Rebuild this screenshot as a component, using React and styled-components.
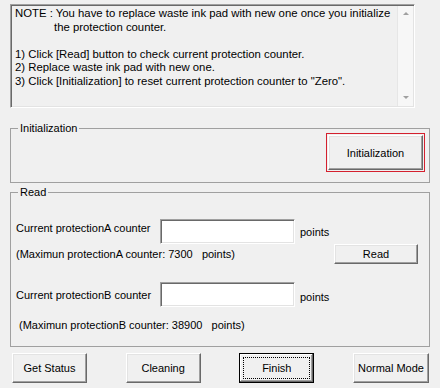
import React from 'react';
import styled, { createGlobalStyle } from 'styled-components';

const Global = createGlobalStyle`
body {
  margin: 0;
  background: #f0f0f0;
  font-family: "Liberation Sans", Arial, sans-serif;
  font-size: 11px;
  color: #000;
}
`

const Page = styled.div`
width: 440px;
height: 388px;
padding-top: 4px;
box-sizing: border-box;
background: #f0f0f0;
`

const NoteBox = styled.div`
margin-left: 10px;
width: 405px;
height: 104px;
box-sizing: border-box;
display: flex;
border-style: solid;
border-width: 1px;
border-color: #a0a0a0 #ffffff #ffffff #a0a0a0;
box-shadow: inset 1px 1px 0 #696969, inset -1px -1px 0 #e3e3e3;
`

const NoteText = styled.div`
flex: 1;
padding: 2px 0 0 4px;
font-size: 11.35px;
line-height: 13.5px;
`

const Line = styled.div`
padding-left: ${props => props.indent || 0}px;
min-height: 13.5px;
`

const ScrollBar = styled.div`
width: 16px;
margin: 1px 1px 1px 0;
border-left: 1px solid #e6e6e6;
background: #f7f7f7;
display: flex;
flex-direction: column;
justify-content: space-between;
align-items: center;
padding: 6px 0 7px;
box-sizing: border-box;
`

const Arrow = styled.div`
width: 0;
height: 0;
border-left: 3.5px solid transparent;
border-right: 3.5px solid transparent;
${props => props.down
  ? 'border-top: 3px solid #a0a0a0;'
  : 'border-bottom: 3px solid #a0a0a0;'}
`

const Group = styled.fieldset`
margin: ${props => props.top || 0}px 10px 0;
padding: 0 5px ${props => props.bottom || 0}px;
border: 1px solid #a0a0a0;
min-width: 0;
`

const Legend = styled.legend`
margin-left: 2px;
padding: 0 2px;
line-height: 13px;
`

const InitRow = styled.div`
display: flex;
justify-content: flex-end;
padding-right: 1px;
`

const Button = styled.button`
font-family: "Liberation Sans", Arial, sans-serif;
font-size: 11px;
color: #000;
width: ${props => props.w || 75}px;
height: ${props => props.h || 30}px;
padding: 0;
background: #f0f0f0;
border-style: solid;
border-width: 1px;
border-color: #ffffff #696969 #696969 #ffffff;
box-shadow: inset -1px -1px 0 #a0a0a0, inset 1px 1px 0 #e3e3e3;
`

const InitButton = styled(Button)`
outline: 1px solid #d4202e;
outline-offset: 1px;
`

const DefaultButton = styled(Button)`
border: 1px solid #000;
box-shadow: inset -1px -1px 0 #696969, inset 1px 1px 0 #ffffff, inset -2px -2px 0 #a0a0a0;
outline: 1px dotted #000;
outline-offset: -5px;
`

const Row = styled.div`
display: flex;
align-items: flex-start;
margin-top: ${props => props.top || 0}px;
`

const Label = styled.div`
width: 144px;
line-height: 13px;
padding-top: ${props => props.pad || 0}px;
`

const TextBox = styled.div`
width: 135px;
height: 25px;
box-sizing: border-box;
background: #fff;
border-style: solid;
border-width: 1px;
border-color: #a0a0a0 #ffffff #ffffff #a0a0a0;
box-shadow: inset 1px 1px 0 #696969, inset -1px -1px 0 #e3e3e3;
`

const Points = styled.div`
margin-left: 5px;
line-height: 13px;
padding-top: ${props => props.pad || 0}px;
`

const MaxRow = styled.div`
display: flex;
align-items: center;
justify-content: space-between;
height: 20px;
padding-right: 6px;
`

const MaxText = styled.div`
line-height: 13px;
padding-left: ${props => props.indent || 0}px;
margin-top: ${props => props.top || 0}px;
white-space: pre;
`

const BottomBar = styled.div`
display: flex;
justify-content: space-between;
padding: 0 11px 0 12px;
margin-top: 6px;
`

export default function App() {
  return (<>
    <Global />
    <Page>
      <NoteBox>
        <NoteText>
          <Line>NOTE : You have to replace waste ink pad with new one once you initialize</Line>
          <Line indent={39}>the protection counter.</Line>
          <Line />
          <Line>1) Click [Read] button to check current protection counter.</Line>
          <Line>2) Replace waste ink pad with new one.</Line>
          <Line>3) Click [Initialization] to reset current protection counter to "Zero".</Line>
        </NoteText>
        <ScrollBar>
          <Arrow />
          <Arrow down />
        </ScrollBar>
      </NoteBox>

      <Group top={14} bottom={12}>
        <Legend>Initialization</Legend>
        <InitRow>
          <InitButton w={95} h={35}>Initialization</InitButton>
        </InitRow>
      </Group>

      <Group top={3} bottom={14}>
        <Legend>Read</Legend>
        <Row top={20}>
          <Label pad={3}>Current protectionA counter</Label>
          <TextBox />
          <Points pad={7}>points</Points>
        </Row>
        <MaxRow>
          <MaxText>(Maximun protectionA counter: 7300   points)</MaxText>
          <Button w={84} h={20}>Read</Button>
        </MaxRow>
        <Row top={18}>
          <Label pad={7}>Current protectionB counter</Label>
          <TextBox />
          <Points pad={9}>points</Points>
        </Row>
        <MaxText indent={3} top={12}>(Maximun protectionB counter: 38900   points)</MaxText>
      </Group>

      <BottomBar>
        <Button>Get Status</Button>
        <Button>Cleaning</Button>
        <DefaultButton>Finish</DefaultButton>
        <Button w={76}>Normal Mode</Button>
      </BottomBar>
    </Page>
  </>)
}
